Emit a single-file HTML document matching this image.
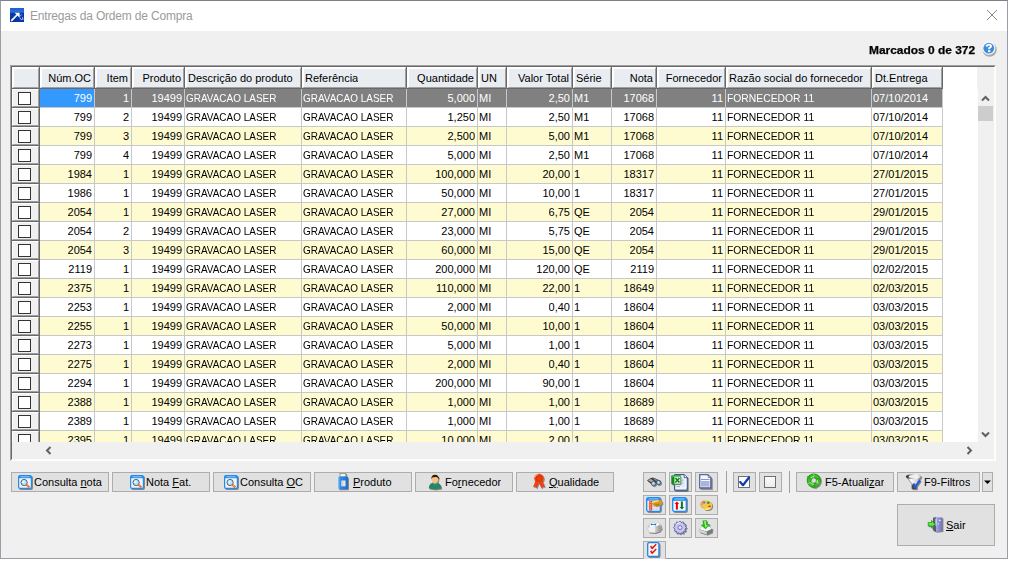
<!DOCTYPE html><html><head><meta charset="utf-8"><style>
*{box-sizing:border-box}
body{margin:0;width:1022px;height:566px;background:#fff;overflow:hidden;position:relative;font-family:"Liberation Sans",sans-serif;font-size:11px;color:#000}
.a{position:absolute}
.win{position:absolute;left:0;top:0;width:1008px;height:559px;border:1px solid #9a9ea6;border-top-color:#7b8089;background:#f0f0f0}
.tb{position:absolute;left:0;top:0;width:1006px;height:30px;background:#fff}
.title{position:absolute;left:30px;top:7px;font-size:12px;line-height:16px;color:#9b9b9b;white-space:pre;letter-spacing:-0.18px}
.grid{position:absolute;left:10px;top:65px;width:986px;height:396px;border-top:1px solid #a0a0a0;border-left:1px solid #a0a0a0;border-right:1px solid #fff;border-bottom:1px solid #fff}
.gin{position:absolute;left:0;top:0;width:984px;height:394px;border-top:1px solid #696969;border-left:1px solid #696969;border-right:1px solid #fbfbfb;border-bottom:1px solid #fbfbfb;background:#fff;overflow:hidden}
.t{position:absolute;white-space:pre;line-height:18px;height:18px;overflow:hidden}
.hc{position:absolute;background:#e9edf1;border-top:2px solid #fff;border-left:2px solid #fff;border-right:1px solid #a0a0a0;border-bottom:1px solid #a0a0a0}
.dk{position:absolute;background:#696969}
.fc{position:absolute;left:0;width:27px;height:18px;background:#f0f0f0;border-top:1px solid #fff;border-left:1px solid #fff;border-right:1px solid #a0a0a0;border-bottom:1px solid #a0a0a0}
.cb{position:absolute;left:5px;top:2px;width:13px;height:13px;border:1px solid #333;background:#fff}
.u{transform:scaleX(0.905);transform-origin:0 0}
.u2{transform:scaleX(0.94);transform-origin:0 0}
.btn{position:absolute;height:20px;border:1px solid #adadad;background:#e1e1e1;line-height:18px;white-space:pre}
.sb{position:absolute;background:#f0f0f0}
.sh{filter:drop-shadow(1px 1px 0.6px rgba(0,0,0,0.4))}
</style></head><body>
<div class="win">
<div class="tb"></div>
</div>

<svg class="a" style="left:10px;top:8px" width="14" height="14" viewBox="0 0 14 14">
<defs><linearGradient id="tg" x1="0" y1="0" x2="0" y2="1"><stop offset="0" stop-color="#1e5ed0"/><stop offset="0.3" stop-color="#2f70d8"/><stop offset="0.36" stop-color="#0a3aa8"/><stop offset="1" stop-color="#0736a4"/></linearGradient></defs>
<rect x="0" y="0" width="14" height="14" fill="url(#tg)"/>
<path d="M1.2 12.8 L7.5 6.5" stroke="#fff" stroke-width="1.7"/><path d="M4.6 4.8 L9.6 4.8 L9.6 9.8 Z" fill="#fff"/>
<path d="M11.5 6.5 L10 8.5 M9.5 10 L11 10.5 M10.5 12 L12.5 11 M12.5 9 L13 12" stroke="#a8c4f0" stroke-width="1" opacity="0.9"/>
</svg>
<div class="title" style="left:30px;top:8px">Entregas da Ordem de Compra</div>
<svg class="a" style="left:986px;top:9px" width="12" height="12" viewBox="0 0 12 12"><path d="M1 1 L11 11 M11 1 L1 11" stroke="#7a7a7a" stroke-width="0.9"/></svg>
<div class="a" style="left:869px;top:41px;font-weight:bold;line-height:18px;white-space:pre;transform:scaleX(1.085);transform-origin:0 0;-webkit-text-stroke:0.25px #000">Marcados 0 de 372</div>
<svg class="a" style="left:980px;top:40px" width="18" height="18" viewBox="0 0 18 18">
<circle cx="9.6" cy="9.6" r="7.2" fill="#555" opacity="0.45"/>
<circle cx="8.8" cy="8.2" r="6.6" fill="#fbfaf8"/>
<circle cx="8.8" cy="8.2" r="5.4" fill="#3c8ce0"/>
<path d="M4.5 7 Q8.8 2.5 13 7 Q8.8 5 4.5 7Z" fill="#7fb8f0" opacity="0.6"/>
<path d="M6.6 6.6 Q6.8 4.6 8.9 4.6 Q11 4.6 11 6.3 Q11 7.4 9.2 8.2 L9.2 9.2" stroke="#fff" stroke-width="1.9" fill="none"/>
<rect x="8" y="10.2" width="2.3" height="1.9" fill="#fff"/>
</svg>
<div class="grid"><div class="gin">
<div class="hc" style="left:0;top:0;width:27px;height:21px;background:#e9edf1"></div>
<div class="hc" style="left:28px;top:0;width:54px;height:21px"></div>
<div class="t" style="right:903px;top:2px">Núm.OC</div>
<div class="hc" style="left:83px;top:0;width:36px;height:21px"></div>
<div class="t" style="right:866px;top:2px">Item</div>
<div class="hc" style="left:120px;top:0;width:52px;height:21px"></div>
<div class="t" style="right:813px;top:2px">Produto</div>
<div class="hc" style="left:173px;top:0;width:116px;height:21px"></div>
<div class="t" style="left:176px;top:2px">Descrição do produto</div>
<div class="hc" style="left:290px;top:0;width:104px;height:21px"></div>
<div class="t" style="left:293px;top:2px">Referência</div>
<div class="hc" style="left:395px;top:0;width:70px;height:21px"></div>
<div class="t" style="right:520px;top:2px">Quantidade</div>
<div class="hc" style="left:466px;top:0;width:28px;height:21px"></div>
<div class="t" style="left:469px;top:2px">UN</div>
<div class="hc" style="left:495px;top:0;width:65px;height:21px"></div>
<div class="t" style="right:425px;top:2px">Valor Total</div>
<div class="hc" style="left:561px;top:0;width:38px;height:21px"></div>
<div class="t" style="left:564px;top:2px">Série</div>
<div class="hc" style="left:600px;top:0;width:44px;height:21px"></div>
<div class="t" style="right:341px;top:2px">Nota</div>
<div class="hc" style="left:645px;top:0;width:68px;height:21px"></div>
<div class="t" style="right:272px;top:2px">Fornecedor</div>
<div class="hc" style="left:714px;top:0;width:145px;height:21px"></div>
<div class="t" style="left:717px;top:2px">Razão social do fornecedor</div>
<div class="hc" style="left:860px;top:0;width:70px;height:21px"></div>
<div class="t" style="left:863px;top:2px">Dt.Entrega</div>
<div class="dk" style="left:0;top:21px;width:930px;height:1px"></div>
<div class="dk" style="left:27px;top:0;width:1px;height:22px"></div>
<div class="dk" style="left:82px;top:0;width:1px;height:22px"></div>
<div class="dk" style="left:119px;top:0;width:1px;height:22px"></div>
<div class="dk" style="left:172px;top:0;width:1px;height:22px"></div>
<div class="dk" style="left:289px;top:0;width:1px;height:22px"></div>
<div class="dk" style="left:394px;top:0;width:1px;height:22px"></div>
<div class="dk" style="left:465px;top:0;width:1px;height:22px"></div>
<div class="dk" style="left:494px;top:0;width:1px;height:22px"></div>
<div class="dk" style="left:560px;top:0;width:1px;height:22px"></div>
<div class="dk" style="left:599px;top:0;width:1px;height:22px"></div>
<div class="dk" style="left:644px;top:0;width:1px;height:22px"></div>
<div class="dk" style="left:713px;top:0;width:1px;height:22px"></div>
<div class="dk" style="left:859px;top:0;width:1px;height:22px"></div>
<div class="dk" style="left:930px;top:0;width:1px;height:22px"></div>
<div class="a" style="left:28px;top:22px;width:902px;height:19px;background:#808080;border-bottom:1px solid #c8c8c8"></div>
<div class="a" style="left:28px;top:22px;width:54px;height:18px;background:#3399ff"></div>
<div class="fc" style="top:22px"><div class="cb"></div></div>
<div class="dk" style="left:0;top:40px;width:28px;height:1px"></div>
<div class="t" style="right:902px;top:22px;color:#fff">799</div>
<div class="t" style="right:865px;top:22px;color:#fff">1</div>
<div class="t" style="right:812px;top:22px;color:#fff">19499</div>
<div class="t u" style="left:174px;top:22px;color:#fff">GRAVACAO LASER</div>
<div class="t u" style="left:291px;top:22px;color:#fff">GRAVACAO LASER</div>
<div class="t" style="right:519px;top:22px;color:#fff">5,000</div>
<div class="t" style="left:467px;top:22px;color:#fff">MI</div>
<div class="t" style="right:424px;top:22px;color:#fff">2,50</div>
<div class="t" style="left:562px;top:22px;color:#fff">M1</div>
<div class="t" style="right:340px;top:22px;color:#fff">17068</div>
<div class="t" style="right:271px;top:22px;color:#fff">11</div>
<div class="t u2" style="left:715px;top:22px;color:#fff">FORNECEDOR 11</div>
<div class="t" style="left:861px;top:22px;color:#fff">07/10/2014</div>
<div class="a" style="left:28px;top:41px;width:902px;height:19px;background:#fff;border-bottom:1px solid #c8c8c8"></div>
<div class="fc" style="top:41px"><div class="cb"></div></div>
<div class="dk" style="left:0;top:59px;width:28px;height:1px"></div>
<div class="t" style="right:902px;top:41px;color:#000">799</div>
<div class="t" style="right:865px;top:41px;color:#000">2</div>
<div class="t" style="right:812px;top:41px;color:#000">19499</div>
<div class="t u" style="left:174px;top:41px;color:#000">GRAVACAO LASER</div>
<div class="t u" style="left:291px;top:41px;color:#000">GRAVACAO LASER</div>
<div class="t" style="right:519px;top:41px;color:#000">1,250</div>
<div class="t" style="left:467px;top:41px;color:#000">MI</div>
<div class="t" style="right:424px;top:41px;color:#000">2,50</div>
<div class="t" style="left:562px;top:41px;color:#000">M1</div>
<div class="t" style="right:340px;top:41px;color:#000">17068</div>
<div class="t" style="right:271px;top:41px;color:#000">11</div>
<div class="t u2" style="left:715px;top:41px;color:#000">FORNECEDOR 11</div>
<div class="t" style="left:861px;top:41px;color:#000">07/10/2014</div>
<div class="a" style="left:28px;top:60px;width:902px;height:19px;background:#fefbd0;border-bottom:1px solid #c8c8c8"></div>
<div class="fc" style="top:60px"><div class="cb"></div></div>
<div class="dk" style="left:0;top:78px;width:28px;height:1px"></div>
<div class="t" style="right:902px;top:60px;color:#000">799</div>
<div class="t" style="right:865px;top:60px;color:#000">3</div>
<div class="t" style="right:812px;top:60px;color:#000">19499</div>
<div class="t u" style="left:174px;top:60px;color:#000">GRAVACAO LASER</div>
<div class="t u" style="left:291px;top:60px;color:#000">GRAVACAO LASER</div>
<div class="t" style="right:519px;top:60px;color:#000">2,500</div>
<div class="t" style="left:467px;top:60px;color:#000">MI</div>
<div class="t" style="right:424px;top:60px;color:#000">5,00</div>
<div class="t" style="left:562px;top:60px;color:#000">M1</div>
<div class="t" style="right:340px;top:60px;color:#000">17068</div>
<div class="t" style="right:271px;top:60px;color:#000">11</div>
<div class="t u2" style="left:715px;top:60px;color:#000">FORNECEDOR 11</div>
<div class="t" style="left:861px;top:60px;color:#000">07/10/2014</div>
<div class="a" style="left:28px;top:79px;width:902px;height:19px;background:#fff;border-bottom:1px solid #c8c8c8"></div>
<div class="fc" style="top:79px"><div class="cb"></div></div>
<div class="dk" style="left:0;top:97px;width:28px;height:1px"></div>
<div class="t" style="right:902px;top:79px;color:#000">799</div>
<div class="t" style="right:865px;top:79px;color:#000">4</div>
<div class="t" style="right:812px;top:79px;color:#000">19499</div>
<div class="t u" style="left:174px;top:79px;color:#000">GRAVACAO LASER</div>
<div class="t u" style="left:291px;top:79px;color:#000">GRAVACAO LASER</div>
<div class="t" style="right:519px;top:79px;color:#000">5,000</div>
<div class="t" style="left:467px;top:79px;color:#000">MI</div>
<div class="t" style="right:424px;top:79px;color:#000">2,50</div>
<div class="t" style="left:562px;top:79px;color:#000">M1</div>
<div class="t" style="right:340px;top:79px;color:#000">17068</div>
<div class="t" style="right:271px;top:79px;color:#000">11</div>
<div class="t u2" style="left:715px;top:79px;color:#000">FORNECEDOR 11</div>
<div class="t" style="left:861px;top:79px;color:#000">07/10/2014</div>
<div class="a" style="left:28px;top:98px;width:902px;height:19px;background:#fefbd0;border-bottom:1px solid #c8c8c8"></div>
<div class="fc" style="top:98px"><div class="cb"></div></div>
<div class="dk" style="left:0;top:116px;width:28px;height:1px"></div>
<div class="t" style="right:902px;top:98px;color:#000">1984</div>
<div class="t" style="right:865px;top:98px;color:#000">1</div>
<div class="t" style="right:812px;top:98px;color:#000">19499</div>
<div class="t u" style="left:174px;top:98px;color:#000">GRAVACAO LASER</div>
<div class="t u" style="left:291px;top:98px;color:#000">GRAVACAO LASER</div>
<div class="t" style="right:519px;top:98px;color:#000">100,000</div>
<div class="t" style="left:467px;top:98px;color:#000">MI</div>
<div class="t" style="right:424px;top:98px;color:#000">20,00</div>
<div class="t" style="left:562px;top:98px;color:#000">1</div>
<div class="t" style="right:340px;top:98px;color:#000">18317</div>
<div class="t" style="right:271px;top:98px;color:#000">11</div>
<div class="t u2" style="left:715px;top:98px;color:#000">FORNECEDOR 11</div>
<div class="t" style="left:861px;top:98px;color:#000">27/01/2015</div>
<div class="a" style="left:28px;top:117px;width:902px;height:19px;background:#fff;border-bottom:1px solid #c8c8c8"></div>
<div class="fc" style="top:117px"><div class="cb"></div></div>
<div class="dk" style="left:0;top:135px;width:28px;height:1px"></div>
<div class="t" style="right:902px;top:117px;color:#000">1986</div>
<div class="t" style="right:865px;top:117px;color:#000">1</div>
<div class="t" style="right:812px;top:117px;color:#000">19499</div>
<div class="t u" style="left:174px;top:117px;color:#000">GRAVACAO LASER</div>
<div class="t u" style="left:291px;top:117px;color:#000">GRAVACAO LASER</div>
<div class="t" style="right:519px;top:117px;color:#000">50,000</div>
<div class="t" style="left:467px;top:117px;color:#000">MI</div>
<div class="t" style="right:424px;top:117px;color:#000">10,00</div>
<div class="t" style="left:562px;top:117px;color:#000">1</div>
<div class="t" style="right:340px;top:117px;color:#000">18317</div>
<div class="t" style="right:271px;top:117px;color:#000">11</div>
<div class="t u2" style="left:715px;top:117px;color:#000">FORNECEDOR 11</div>
<div class="t" style="left:861px;top:117px;color:#000">27/01/2015</div>
<div class="a" style="left:28px;top:136px;width:902px;height:19px;background:#fefbd0;border-bottom:1px solid #c8c8c8"></div>
<div class="fc" style="top:136px"><div class="cb"></div></div>
<div class="dk" style="left:0;top:154px;width:28px;height:1px"></div>
<div class="t" style="right:902px;top:136px;color:#000">2054</div>
<div class="t" style="right:865px;top:136px;color:#000">1</div>
<div class="t" style="right:812px;top:136px;color:#000">19499</div>
<div class="t u" style="left:174px;top:136px;color:#000">GRAVACAO LASER</div>
<div class="t u" style="left:291px;top:136px;color:#000">GRAVACAO LASER</div>
<div class="t" style="right:519px;top:136px;color:#000">27,000</div>
<div class="t" style="left:467px;top:136px;color:#000">MI</div>
<div class="t" style="right:424px;top:136px;color:#000">6,75</div>
<div class="t" style="left:562px;top:136px;color:#000">QE</div>
<div class="t" style="right:340px;top:136px;color:#000">2054</div>
<div class="t" style="right:271px;top:136px;color:#000">11</div>
<div class="t u2" style="left:715px;top:136px;color:#000">FORNECEDOR 11</div>
<div class="t" style="left:861px;top:136px;color:#000">29/01/2015</div>
<div class="a" style="left:28px;top:155px;width:902px;height:19px;background:#fff;border-bottom:1px solid #c8c8c8"></div>
<div class="fc" style="top:155px"><div class="cb"></div></div>
<div class="dk" style="left:0;top:173px;width:28px;height:1px"></div>
<div class="t" style="right:902px;top:155px;color:#000">2054</div>
<div class="t" style="right:865px;top:155px;color:#000">2</div>
<div class="t" style="right:812px;top:155px;color:#000">19499</div>
<div class="t u" style="left:174px;top:155px;color:#000">GRAVACAO LASER</div>
<div class="t u" style="left:291px;top:155px;color:#000">GRAVACAO LASER</div>
<div class="t" style="right:519px;top:155px;color:#000">23,000</div>
<div class="t" style="left:467px;top:155px;color:#000">MI</div>
<div class="t" style="right:424px;top:155px;color:#000">5,75</div>
<div class="t" style="left:562px;top:155px;color:#000">QE</div>
<div class="t" style="right:340px;top:155px;color:#000">2054</div>
<div class="t" style="right:271px;top:155px;color:#000">11</div>
<div class="t u2" style="left:715px;top:155px;color:#000">FORNECEDOR 11</div>
<div class="t" style="left:861px;top:155px;color:#000">29/01/2015</div>
<div class="a" style="left:28px;top:174px;width:902px;height:19px;background:#fefbd0;border-bottom:1px solid #c8c8c8"></div>
<div class="fc" style="top:174px"><div class="cb"></div></div>
<div class="dk" style="left:0;top:192px;width:28px;height:1px"></div>
<div class="t" style="right:902px;top:174px;color:#000">2054</div>
<div class="t" style="right:865px;top:174px;color:#000">3</div>
<div class="t" style="right:812px;top:174px;color:#000">19499</div>
<div class="t u" style="left:174px;top:174px;color:#000">GRAVACAO LASER</div>
<div class="t u" style="left:291px;top:174px;color:#000">GRAVACAO LASER</div>
<div class="t" style="right:519px;top:174px;color:#000">60,000</div>
<div class="t" style="left:467px;top:174px;color:#000">MI</div>
<div class="t" style="right:424px;top:174px;color:#000">15,00</div>
<div class="t" style="left:562px;top:174px;color:#000">QE</div>
<div class="t" style="right:340px;top:174px;color:#000">2054</div>
<div class="t" style="right:271px;top:174px;color:#000">11</div>
<div class="t u2" style="left:715px;top:174px;color:#000">FORNECEDOR 11</div>
<div class="t" style="left:861px;top:174px;color:#000">29/01/2015</div>
<div class="a" style="left:28px;top:193px;width:902px;height:19px;background:#fff;border-bottom:1px solid #c8c8c8"></div>
<div class="fc" style="top:193px"><div class="cb"></div></div>
<div class="dk" style="left:0;top:211px;width:28px;height:1px"></div>
<div class="t" style="right:902px;top:193px;color:#000">2119</div>
<div class="t" style="right:865px;top:193px;color:#000">1</div>
<div class="t" style="right:812px;top:193px;color:#000">19499</div>
<div class="t u" style="left:174px;top:193px;color:#000">GRAVACAO LASER</div>
<div class="t u" style="left:291px;top:193px;color:#000">GRAVACAO LASER</div>
<div class="t" style="right:519px;top:193px;color:#000">200,000</div>
<div class="t" style="left:467px;top:193px;color:#000">MI</div>
<div class="t" style="right:424px;top:193px;color:#000">120,00</div>
<div class="t" style="left:562px;top:193px;color:#000">QE</div>
<div class="t" style="right:340px;top:193px;color:#000">2119</div>
<div class="t" style="right:271px;top:193px;color:#000">11</div>
<div class="t u2" style="left:715px;top:193px;color:#000">FORNECEDOR 11</div>
<div class="t" style="left:861px;top:193px;color:#000">02/02/2015</div>
<div class="a" style="left:28px;top:212px;width:902px;height:19px;background:#fefbd0;border-bottom:1px solid #c8c8c8"></div>
<div class="fc" style="top:212px"><div class="cb"></div></div>
<div class="dk" style="left:0;top:230px;width:28px;height:1px"></div>
<div class="t" style="right:902px;top:212px;color:#000">2375</div>
<div class="t" style="right:865px;top:212px;color:#000">1</div>
<div class="t" style="right:812px;top:212px;color:#000">19499</div>
<div class="t u" style="left:174px;top:212px;color:#000">GRAVACAO LASER</div>
<div class="t u" style="left:291px;top:212px;color:#000">GRAVACAO LASER</div>
<div class="t" style="right:519px;top:212px;color:#000">110,000</div>
<div class="t" style="left:467px;top:212px;color:#000">MI</div>
<div class="t" style="right:424px;top:212px;color:#000">22,00</div>
<div class="t" style="left:562px;top:212px;color:#000">1</div>
<div class="t" style="right:340px;top:212px;color:#000">18649</div>
<div class="t" style="right:271px;top:212px;color:#000">11</div>
<div class="t u2" style="left:715px;top:212px;color:#000">FORNECEDOR 11</div>
<div class="t" style="left:861px;top:212px;color:#000">02/03/2015</div>
<div class="a" style="left:28px;top:231px;width:902px;height:19px;background:#fff;border-bottom:1px solid #c8c8c8"></div>
<div class="fc" style="top:231px"><div class="cb"></div></div>
<div class="dk" style="left:0;top:249px;width:28px;height:1px"></div>
<div class="t" style="right:902px;top:231px;color:#000">2253</div>
<div class="t" style="right:865px;top:231px;color:#000">1</div>
<div class="t" style="right:812px;top:231px;color:#000">19499</div>
<div class="t u" style="left:174px;top:231px;color:#000">GRAVACAO LASER</div>
<div class="t u" style="left:291px;top:231px;color:#000">GRAVACAO LASER</div>
<div class="t" style="right:519px;top:231px;color:#000">2,000</div>
<div class="t" style="left:467px;top:231px;color:#000">MI</div>
<div class="t" style="right:424px;top:231px;color:#000">0,40</div>
<div class="t" style="left:562px;top:231px;color:#000">1</div>
<div class="t" style="right:340px;top:231px;color:#000">18604</div>
<div class="t" style="right:271px;top:231px;color:#000">11</div>
<div class="t u2" style="left:715px;top:231px;color:#000">FORNECEDOR 11</div>
<div class="t" style="left:861px;top:231px;color:#000">03/03/2015</div>
<div class="a" style="left:28px;top:250px;width:902px;height:19px;background:#fefbd0;border-bottom:1px solid #c8c8c8"></div>
<div class="fc" style="top:250px"><div class="cb"></div></div>
<div class="dk" style="left:0;top:268px;width:28px;height:1px"></div>
<div class="t" style="right:902px;top:250px;color:#000">2255</div>
<div class="t" style="right:865px;top:250px;color:#000">1</div>
<div class="t" style="right:812px;top:250px;color:#000">19499</div>
<div class="t u" style="left:174px;top:250px;color:#000">GRAVACAO LASER</div>
<div class="t u" style="left:291px;top:250px;color:#000">GRAVACAO LASER</div>
<div class="t" style="right:519px;top:250px;color:#000">50,000</div>
<div class="t" style="left:467px;top:250px;color:#000">MI</div>
<div class="t" style="right:424px;top:250px;color:#000">10,00</div>
<div class="t" style="left:562px;top:250px;color:#000">1</div>
<div class="t" style="right:340px;top:250px;color:#000">18604</div>
<div class="t" style="right:271px;top:250px;color:#000">11</div>
<div class="t u2" style="left:715px;top:250px;color:#000">FORNECEDOR 11</div>
<div class="t" style="left:861px;top:250px;color:#000">03/03/2015</div>
<div class="a" style="left:28px;top:269px;width:902px;height:19px;background:#fff;border-bottom:1px solid #c8c8c8"></div>
<div class="fc" style="top:269px"><div class="cb"></div></div>
<div class="dk" style="left:0;top:287px;width:28px;height:1px"></div>
<div class="t" style="right:902px;top:269px;color:#000">2273</div>
<div class="t" style="right:865px;top:269px;color:#000">1</div>
<div class="t" style="right:812px;top:269px;color:#000">19499</div>
<div class="t u" style="left:174px;top:269px;color:#000">GRAVACAO LASER</div>
<div class="t u" style="left:291px;top:269px;color:#000">GRAVACAO LASER</div>
<div class="t" style="right:519px;top:269px;color:#000">5,000</div>
<div class="t" style="left:467px;top:269px;color:#000">MI</div>
<div class="t" style="right:424px;top:269px;color:#000">1,00</div>
<div class="t" style="left:562px;top:269px;color:#000">1</div>
<div class="t" style="right:340px;top:269px;color:#000">18604</div>
<div class="t" style="right:271px;top:269px;color:#000">11</div>
<div class="t u2" style="left:715px;top:269px;color:#000">FORNECEDOR 11</div>
<div class="t" style="left:861px;top:269px;color:#000">03/03/2015</div>
<div class="a" style="left:28px;top:288px;width:902px;height:19px;background:#fefbd0;border-bottom:1px solid #c8c8c8"></div>
<div class="fc" style="top:288px"><div class="cb"></div></div>
<div class="dk" style="left:0;top:306px;width:28px;height:1px"></div>
<div class="t" style="right:902px;top:288px;color:#000">2275</div>
<div class="t" style="right:865px;top:288px;color:#000">1</div>
<div class="t" style="right:812px;top:288px;color:#000">19499</div>
<div class="t u" style="left:174px;top:288px;color:#000">GRAVACAO LASER</div>
<div class="t u" style="left:291px;top:288px;color:#000">GRAVACAO LASER</div>
<div class="t" style="right:519px;top:288px;color:#000">2,000</div>
<div class="t" style="left:467px;top:288px;color:#000">MI</div>
<div class="t" style="right:424px;top:288px;color:#000">0,40</div>
<div class="t" style="left:562px;top:288px;color:#000">1</div>
<div class="t" style="right:340px;top:288px;color:#000">18604</div>
<div class="t" style="right:271px;top:288px;color:#000">11</div>
<div class="t u2" style="left:715px;top:288px;color:#000">FORNECEDOR 11</div>
<div class="t" style="left:861px;top:288px;color:#000">03/03/2015</div>
<div class="a" style="left:28px;top:307px;width:902px;height:19px;background:#fff;border-bottom:1px solid #c8c8c8"></div>
<div class="fc" style="top:307px"><div class="cb"></div></div>
<div class="dk" style="left:0;top:325px;width:28px;height:1px"></div>
<div class="t" style="right:902px;top:307px;color:#000">2294</div>
<div class="t" style="right:865px;top:307px;color:#000">1</div>
<div class="t" style="right:812px;top:307px;color:#000">19499</div>
<div class="t u" style="left:174px;top:307px;color:#000">GRAVACAO LASER</div>
<div class="t u" style="left:291px;top:307px;color:#000">GRAVACAO LASER</div>
<div class="t" style="right:519px;top:307px;color:#000">200,000</div>
<div class="t" style="left:467px;top:307px;color:#000">MI</div>
<div class="t" style="right:424px;top:307px;color:#000">90,00</div>
<div class="t" style="left:562px;top:307px;color:#000">1</div>
<div class="t" style="right:340px;top:307px;color:#000">18604</div>
<div class="t" style="right:271px;top:307px;color:#000">11</div>
<div class="t u2" style="left:715px;top:307px;color:#000">FORNECEDOR 11</div>
<div class="t" style="left:861px;top:307px;color:#000">03/03/2015</div>
<div class="a" style="left:28px;top:326px;width:902px;height:19px;background:#fefbd0;border-bottom:1px solid #c8c8c8"></div>
<div class="fc" style="top:326px"><div class="cb"></div></div>
<div class="dk" style="left:0;top:344px;width:28px;height:1px"></div>
<div class="t" style="right:902px;top:326px;color:#000">2388</div>
<div class="t" style="right:865px;top:326px;color:#000">1</div>
<div class="t" style="right:812px;top:326px;color:#000">19499</div>
<div class="t u" style="left:174px;top:326px;color:#000">GRAVACAO LASER</div>
<div class="t u" style="left:291px;top:326px;color:#000">GRAVACAO LASER</div>
<div class="t" style="right:519px;top:326px;color:#000">1,000</div>
<div class="t" style="left:467px;top:326px;color:#000">MI</div>
<div class="t" style="right:424px;top:326px;color:#000">1,00</div>
<div class="t" style="left:562px;top:326px;color:#000">1</div>
<div class="t" style="right:340px;top:326px;color:#000">18689</div>
<div class="t" style="right:271px;top:326px;color:#000">11</div>
<div class="t u2" style="left:715px;top:326px;color:#000">FORNECEDOR 11</div>
<div class="t" style="left:861px;top:326px;color:#000">03/03/2015</div>
<div class="a" style="left:28px;top:345px;width:902px;height:19px;background:#fff;border-bottom:1px solid #c8c8c8"></div>
<div class="fc" style="top:345px"><div class="cb"></div></div>
<div class="dk" style="left:0;top:363px;width:28px;height:1px"></div>
<div class="t" style="right:902px;top:345px;color:#000">2389</div>
<div class="t" style="right:865px;top:345px;color:#000">1</div>
<div class="t" style="right:812px;top:345px;color:#000">19499</div>
<div class="t u" style="left:174px;top:345px;color:#000">GRAVACAO LASER</div>
<div class="t u" style="left:291px;top:345px;color:#000">GRAVACAO LASER</div>
<div class="t" style="right:519px;top:345px;color:#000">1,000</div>
<div class="t" style="left:467px;top:345px;color:#000">MI</div>
<div class="t" style="right:424px;top:345px;color:#000">1,00</div>
<div class="t" style="left:562px;top:345px;color:#000">1</div>
<div class="t" style="right:340px;top:345px;color:#000">18689</div>
<div class="t" style="right:271px;top:345px;color:#000">11</div>
<div class="t u2" style="left:715px;top:345px;color:#000">FORNECEDOR 11</div>
<div class="t" style="left:861px;top:345px;color:#000">03/03/2015</div>
<div class="a" style="left:28px;top:364px;width:902px;height:19px;background:#fefbd0;border-bottom:1px solid #c8c8c8"></div>
<div class="fc" style="top:364px"><div class="cb"></div></div>
<div class="dk" style="left:0;top:382px;width:28px;height:1px"></div>
<div class="t" style="right:902px;top:364px;color:#000">2395</div>
<div class="t" style="right:865px;top:364px;color:#000">1</div>
<div class="t" style="right:812px;top:364px;color:#000">19499</div>
<div class="t u" style="left:174px;top:364px;color:#000">GRAVACAO LASER</div>
<div class="t u" style="left:291px;top:364px;color:#000">GRAVACAO LASER</div>
<div class="t" style="right:519px;top:364px;color:#000">10,000</div>
<div class="t" style="left:467px;top:364px;color:#000">MI</div>
<div class="t" style="right:424px;top:364px;color:#000">2,00</div>
<div class="t" style="left:562px;top:364px;color:#000">1</div>
<div class="t" style="right:340px;top:364px;color:#000">18689</div>
<div class="t" style="right:271px;top:364px;color:#000">11</div>
<div class="t u2" style="left:715px;top:364px;color:#000">FORNECEDOR 11</div>
<div class="t" style="left:861px;top:364px;color:#000">03/03/2015</div>
<div class="a" style="left:82px;top:22px;width:1px;height:353px;background:#c8c8c8"></div>
<div class="a" style="left:119px;top:22px;width:1px;height:353px;background:#c8c8c8"></div>
<div class="a" style="left:172px;top:22px;width:1px;height:353px;background:#c8c8c8"></div>
<div class="a" style="left:289px;top:22px;width:1px;height:353px;background:#c8c8c8"></div>
<div class="a" style="left:394px;top:22px;width:1px;height:353px;background:#c8c8c8"></div>
<div class="a" style="left:465px;top:22px;width:1px;height:353px;background:#c8c8c8"></div>
<div class="a" style="left:494px;top:22px;width:1px;height:353px;background:#c8c8c8"></div>
<div class="a" style="left:560px;top:22px;width:1px;height:353px;background:#c8c8c8"></div>
<div class="a" style="left:599px;top:22px;width:1px;height:353px;background:#c8c8c8"></div>
<div class="a" style="left:644px;top:22px;width:1px;height:353px;background:#c8c8c8"></div>
<div class="a" style="left:713px;top:22px;width:1px;height:353px;background:#c8c8c8"></div>
<div class="a" style="left:859px;top:22px;width:1px;height:353px;background:#c8c8c8"></div>
<div class="a" style="left:930px;top:22px;width:1px;height:353px;background:#c8c8c8"></div>
<div class="dk" style="left:27px;top:22px;width:1px;height:353px"></div>
<div class="sb" style="left:965px;top:0;width:17px;height:22px"></div>
<div class="sb" style="left:966px;top:22px;width:16px;height:353px"></div>
<div class="sb" style="left:28px;top:375px;width:954px;height:17px"></div>
<div class="sb" style="left:0;top:375px;width:28px;height:17px"></div>
<div class="a" style="left:966px;top:39px;width:15px;height:15px;background:#cdcdcd"></div>
<svg class="a" style="left:969px;top:27px" width="9" height="9" viewBox="0 0 9 9"><path d="M1 6.5 L4.5 3 L8 6.5" stroke="#606060" stroke-width="2" fill="none" transform="rotate(0 4.5 4.5)"/></svg>
<svg class="a" style="left:969px;top:363px" width="9" height="9" viewBox="0 0 9 9"><path d="M1 6.5 L4.5 3 L8 6.5" stroke="#606060" stroke-width="2" fill="none" transform="rotate(180 4.5 4.5)"/></svg>
<svg class="a" style="left:32px;top:379px" width="9" height="9" viewBox="0 0 9 9"><path d="M1 6.5 L4.5 3 L8 6.5" stroke="#606060" stroke-width="2" fill="none" transform="rotate(-90 4.5 4.5)"/></svg>
<svg class="a" style="left:953px;top:379px" width="9" height="9" viewBox="0 0 9 9"><path d="M1 6.5 L4.5 3 L8 6.5" stroke="#606060" stroke-width="2" fill="none" transform="rotate(90 4.5 4.5)"/></svg>
</div></div>
<div class="btn" style="left:11px;top:472px;width:98px;height:20px"></div><div class="a sh" style="left:18px;top:475px;line-height:0"><svg width="14" height="14" viewBox="0 0 14 14"><rect x="0.6" y="0.6" width="12.8" height="12.8" rx="1.4" fill="#f4f0fc" stroke="#1a8cf4" stroke-width="1.2"/><rect x="1" y="1" width="12" height="2.2" fill="#1a8cf4"/><line x1="2.5" y1="1.8" x2="11.5" y2="1.8" stroke="#b8e0ff" stroke-width="0.8"/><circle cx="6.1" cy="7.5" r="3.1" fill="#b4e4fa" stroke="#606060" stroke-width="1"/><circle cx="5.4" cy="6.8" r="1.2" fill="#e4f6ff"/><path d="M8.4 9.7 L11.4 12.4" stroke="#f07020" stroke-width="2.1"/><path d="M9.4 10.5 L10.4 11.4" stroke="#ffd050" stroke-width="0.8"/></svg></div><div class="t" style="left:34px;top:473px">Consulta <span style="text-decoration:underline">n</span>ota</div>
<div class="btn" style="left:112px;top:472px;width:98px;height:20px"></div><div class="a sh" style="left:130px;top:475px;line-height:0"><svg width="14" height="14" viewBox="0 0 14 14"><rect x="0.6" y="0.6" width="12.8" height="12.8" rx="1.4" fill="#f4f0fc" stroke="#1a8cf4" stroke-width="1.2"/><rect x="1" y="1" width="12" height="2.2" fill="#1a8cf4"/><line x1="2.5" y1="1.8" x2="11.5" y2="1.8" stroke="#b8e0ff" stroke-width="0.8"/><circle cx="6.1" cy="7.5" r="3.1" fill="#b4e4fa" stroke="#606060" stroke-width="1"/><circle cx="5.4" cy="6.8" r="1.2" fill="#e4f6ff"/><path d="M8.4 9.7 L11.4 12.4" stroke="#f07020" stroke-width="2.1"/><path d="M9.4 10.5 L10.4 11.4" stroke="#ffd050" stroke-width="0.8"/></svg></div><div class="t" style="left:146px;top:473px">Nota <span style="text-decoration:underline">F</span>at.</div>
<div class="btn" style="left:213px;top:472px;width:98px;height:20px"></div><div class="a sh" style="left:224px;top:475px;line-height:0"><svg width="14" height="14" viewBox="0 0 14 14"><rect x="0.6" y="0.6" width="12.8" height="12.8" rx="1.4" fill="#f4f0fc" stroke="#1a8cf4" stroke-width="1.2"/><rect x="1" y="1" width="12" height="2.2" fill="#1a8cf4"/><line x1="2.5" y1="1.8" x2="11.5" y2="1.8" stroke="#b8e0ff" stroke-width="0.8"/><circle cx="6.1" cy="7.5" r="3.1" fill="#b4e4fa" stroke="#606060" stroke-width="1"/><circle cx="5.4" cy="6.8" r="1.2" fill="#e4f6ff"/><path d="M8.4 9.7 L11.4 12.4" stroke="#f07020" stroke-width="2.1"/><path d="M9.4 10.5 L10.4 11.4" stroke="#ffd050" stroke-width="0.8"/></svg></div><div class="t" style="left:240px;top:473px">Consulta <span style="text-decoration:underline">O</span>C</div>
<div class="btn" style="left:314px;top:472px;width:98px;height:20px"></div><div class="a sh" style="left:337px;top:473px;line-height:0"><svg width="12" height="17" viewBox="0 0 12 17"><defs><linearGradient id="bt" x1="0" x2="1"><stop offset="0" stop-color="#8cc8fa"/><stop offset="0.25" stop-color="#2e8ae6"/><stop offset="1" stop-color="#1f6fd0"/></linearGradient></defs><rect x="3" y="0.5" width="5.8" height="3.6" fill="#f4f4f4" stroke="#8a8a8a" stroke-width="0.8"/><path d="M1 4.5 Q1 3.5 2 3.5 L10 3.5 Q11 3.5 11 4.5 L11 15 Q11 16.3 9.5 16.3 L2.5 16.3 Q1 16.3 1 15 Z" fill="url(#bt)"/><rect x="4.3" y="7.5" width="4.2" height="5.8" fill="#efe6dc"/><rect x="5.2" y="8.2" width="1" height="4.5" fill="#d8c8b8"/></svg></div><div class="t" style="left:353px;top:473px"><span style="text-decoration:underline">P</span>roduto</div>
<div class="btn" style="left:415px;top:472px;width:98px;height:20px"></div><div class="a sh" style="left:428px;top:474px;line-height:0"><svg width="14" height="16" viewBox="0 0 14 16"><path d="M0.8 14.6 Q0.6 8.6 7 8.6 Q13.4 8.6 13.2 14.6 Q7 16.2 0.8 14.6 Z" fill="#2a8566"/><path d="M4.2 8.8 L7 10.8 L9.8 8.8 Z" fill="#50b8a8"/><ellipse cx="7" cy="5.4" rx="3.2" ry="3.6" fill="#fcc080"/><path d="M3.4 5.4 Q3 0.8 7 0.8 Q11 0.8 10.8 5.6 Q10.4 3.4 9.2 3.2 Q7 2.6 4.2 3.6 Z" fill="#2e1e08"/><path d="M9.6 3 L10.8 5 L10.6 3.2 Z" fill="#1a1004"/></svg></div><div class="t" style="left:445px;top:473px">Fo<span style="text-decoration:underline">r</span>necedor</div>
<div class="btn" style="left:516px;top:472px;width:98px;height:20px"></div><div class="a sh" style="left:532px;top:473px;line-height:0"><svg width="14" height="16" viewBox="0 0 14 16"><path d="M3.5 8 L1 14 L3.2 13.4 L4.3 15.5 L6.8 9.5 Z" fill="#f03c10"/><path d="M10.3 8 L12.8 14 L10.6 13.4 L9.5 15.5 L7 9.5 Z" fill="#f03c10"/><path d="M2.4 10.5 L3.2 11 M11.4 10.5 L10.6 11" stroke="#ffa040" stroke-width="1"/><circle cx="7" cy="5.6" r="4.8" fill="#f04a14"/><circle cx="7" cy="5.6" r="3.4" fill="#d83208"/><circle cx="7.2" cy="5.8" r="2.4" fill="#e84010"/><path d="M3.2 4 Q4 2 6 1.5" stroke="#ffb070" stroke-width="1" fill="none"/></svg></div><div class="t" style="left:549px;top:473px"><span style="text-decoration:underline">Q</span>ualidade</div>
<div class="btn" style="left:643px;top:472px;width:23px;height:20px;"></div>
<div class="btn" style="left:669px;top:472px;width:23px;height:20px;"></div>
<div class="btn" style="left:695px;top:472px;width:23px;height:20px;"></div>
<div class="btn" style="left:643px;top:495px;width:23px;height:20px;"></div>
<div class="btn" style="left:669px;top:495px;width:23px;height:20px;"></div>
<div class="btn" style="left:695px;top:495px;width:23px;height:20px;"></div>
<div class="btn" style="left:643px;top:518px;width:23px;height:20px;"></div>
<div class="btn" style="left:669px;top:518px;width:23px;height:20px;"></div>
<div class="btn" style="left:695px;top:518px;width:23px;height:20px;"></div>
<div class="btn" style="left:643px;top:541px;width:23px;height:18px;border-bottom:none"></div>
<div class="a sh" style="left:646px;top:474px;line-height:0"><svg width="16" height="16" viewBox="0 0 16 16"><path d="M1 6.6 L4.2 4.2 L6.8 3.4 L9.4 4.4 L14.6 6.8 L13.6 10.2 L9.6 9.6 L7.4 11.6 Z" fill="#3c3c3c"/><path d="M2 6.4 L4.6 4.8 L8.2 7.2 L6 8.4 Z" fill="#a8a8a8"/><path d="M6.4 4.2 L9 4.8 L12.2 6.4 L10 7 Z" fill="#8a8a8a"/><circle cx="7.6" cy="9.6" r="2.2" fill="#8cc4f4" stroke="#444" stroke-width="0.7"/><circle cx="12.6" cy="8.6" r="2.1" fill="#8cc4f4" stroke="#444" stroke-width="0.7"/><circle cx="7.2" cy="9" r="0.8" fill="#e0f0ff"/><circle cx="12.2" cy="8" r="0.8" fill="#e0f0ff"/></svg></div>
<div class="a sh" style="left:671px;top:474px;line-height:0"><svg width="17" height="17" viewBox="0 0 17 17"><path d="M3.6 0.6 L13.4 0.6 L16.2 3.4 L16.2 16.2 L3.6 16.2 Z" fill="#dfe9f8" stroke="#2c4a7c" stroke-width="1"/><path d="M5 14 L14.8 14 L14.8 4.5" stroke="#ffffff" stroke-width="1" fill="none"/><path d="M5.6 12.6 L9 12.6 M11.6 5.5 L11.6 7 M11.6 8.5 L11.6 9.5" stroke="#8aa8d8" stroke-width="0.9"/><path d="M13.2 0.8 L13.2 3.6 L16 3.6" fill="#ffffff" stroke="#2c4a7c" stroke-width="0.8"/><rect x="0.3" y="1.3" width="9.6" height="9.2" rx="1" fill="#108a28"/><rect x="1" y="1.6" width="8.6" height="1.4" fill="#40c050"/><rect x="3.4" y="2.8" width="6.2" height="7" fill="#d4f4c4"/><path d="M4.4 4 L8.4 8.6 M8.4 4 L4.4 8.6" stroke="#1e7a28" stroke-width="1.5"/><path d="M3.2 10.5 L10 10.5 L10 3" stroke="#707070" stroke-width="0.8" fill="none"/></svg></div>
<div class="a sh" style="left:698px;top:474px;line-height:0"><svg width="16" height="16" viewBox="0 0 16 16"><path d="M2.6 1.4 L11 1.4 L14 4.4 L14 15.2 L2.6 15.2 Z" fill="#6a7080" opacity="0.55"/><path d="M1.7 0.7 L9.8 0.7 L12.8 3.7 L12.8 13.8 L1.7 13.8 Z" fill="#f6f8fc" stroke="#5a6a9a" stroke-width="1.3"/><path d="M9.8 0.7 L9.8 3.7 L12.8 3.7 Z" fill="#5a6a9a"/><circle cx="11" cy="2.6" r="0.6" fill="#fff"/><line x1="3" y1="5.5" x2="11.5" y2="5.5" stroke="#8a96c8" stroke-width="1"/><rect x="3" y="7" width="8.5" height="5.6" fill="#a9b5de"/></svg></div>
<div class="a sh" style="left:646px;top:497px;line-height:0"><svg width="17" height="16" viewBox="0 0 17 16"><rect x="0.7" y="0.7" width="13.6" height="13.6" rx="1.5" fill="#f0eefa" stroke="#1a8cf4" stroke-width="1.3"/><rect x="1" y="1" width="13" height="2.6" fill="#1a8cf4"/><line x1="2.5" y1="1.9" x2="12.5" y2="1.9" stroke="#a8d8ff" stroke-width="0.8"/><path d="M2 7 L13 7 M2 9.4 L13 9.4 M2 11.8 L13 11.8 M8 9 L8 13.4 M11 9 L11 13.4" stroke="#c8c8f0" stroke-width="0.7"/><rect x="3.2" y="4" width="3" height="9.6" fill="#f04a1a"/><path d="M4.7 5 L4.7 13" stroke="#ffe8d0" stroke-width="0.8" stroke-dasharray="1 1.2"/><path d="M5 6.2 Q6.6 3.4 10 3 L14.4 2.8 Q16.8 4 16.4 6.6 L14.6 8.6 Q12.4 10.6 9.6 9.8 Q7.6 9.2 6.8 7.8 Z" fill="#d09a28"/><path d="M6.4 5.8 Q8.4 3.8 12.6 3.8" stroke="#fbe4a0" stroke-width="1.3" fill="none"/><path d="M8.6 7.2 Q11 8 13.6 7.2 M10 8.8 Q12 9.2 14 8.2" stroke="#9a6a10" stroke-width="0.6" fill="none"/></svg></div>
<div class="a sh" style="left:672px;top:497px;line-height:0"><svg width="16" height="16" viewBox="0 0 16 16"><rect x="0.7" y="0.7" width="13.6" height="13.6" rx="1.5" fill="#f6f4fc" stroke="#1a8cf4" stroke-width="1.3"/><rect x="1" y="1" width="13" height="2.8" fill="#1a8cf4"/><line x1="2.5" y1="2" x2="12.5" y2="2" stroke="#a8d8ff" stroke-width="0.9"/><path d="M4.9 12.6 L4.9 6.2" stroke="#f00000" stroke-width="2"/><path d="M2.6 7 L4.9 4.6 L7.2 7 Z" fill="#f00000"/><path d="M9.9 4.4 L9.9 10.6" stroke="#0a7a1a" stroke-width="2"/><path d="M7.6 10 L9.9 12.4 L12.2 10 Z" fill="#0a7a1a"/></svg></div>
<div class="a sh" style="left:698px;top:497px;line-height:0"><svg width="16" height="16" viewBox="0 0 16 16"><path d="M2 7.6 Q2 3.4 7.5 3.2 Q13.6 3.2 14.2 8 Q14.2 12.6 9.4 13 Q6.4 13.2 5.2 11 Q4.2 9.6 3 9.8 Q2 9.6 2 7.6 Z" fill="#f6c450"/><path d="M2.4 7.4 Q2.6 4 6.6 3.6 L5 8 Q4 9 3 9 Z" fill="#f4a050"/><path d="M7 12.2 Q11 12.8 13 10" stroke="#f8f060" stroke-width="1.4" fill="none"/><ellipse cx="6.2" cy="5.6" rx="1.4" ry="1" fill="#3a8ae8"/><ellipse cx="10.3" cy="5.8" rx="1.3" ry="1.2" fill="#20a020"/><ellipse cx="11.6" cy="9.4" rx="1.3" ry="0.9" fill="#e82030"/></svg></div>
<div class="a sh" style="left:646px;top:520px;line-height:0"><svg width="16" height="16" viewBox="0 0 16 16"><defs><linearGradient id="kr" x1="0" x2="1"><stop offset="0" stop-color="#d4d4d4"/><stop offset="1" stop-color="#8c8c8c"/></linearGradient></defs><path d="M1.2 8 L3.2 3.4 L11.8 2 L14.6 4.8 L15.6 8.6 L13.6 11.6 L8.8 13 L2.8 12.4 Z" fill="#c8c8c8"/><path d="M3.6 3.6 L11.6 2.4 L14 5 L9 6.6 L4 7.2 Z" fill="#ffffff"/><path d="M1.8 7.8 L4 7.2 L9 6.6 L9 12.6 L3.2 12 Z" fill="#f0f0f0"/><path d="M9 6.6 L14 5 L15.2 8.6 L13.4 11.2 L9 12.6 Z" fill="url(#kr)"/><path d="M5.4 4.4 L8 4.1 L10.6 3.2 L10.2 4.4 L9.4 5.8 L8.6 5 L6.6 5 Z" fill="#1a7ee8"/><circle cx="5.6" cy="4.4" r="0.9" fill="#1a6ad8"/></svg></div>
<div class="a sh" style="left:672px;top:520px;line-height:0"><svg width="16" height="16" viewBox="0 0 16 16"><g transform="translate(8 7.6)"><path d="M0 -6.6 L1.3 -5.2 L3.3 -5.7 L3.6 -3.8 L5.7 -3.3 L5.0 -1.5 L6.6 0 L5.0 1.5 L5.7 3.3 L3.6 3.8 L3.3 5.7 L1.3 5.2 L0 6.6 L-1.3 5.2 L-3.3 5.7 L-3.6 3.8 L-5.7 3.3 L-5.0 1.5 L-6.6 0 L-5.0 -1.5 L-5.7 -3.3 L-3.6 -3.8 L-3.3 -5.7 L-1.3 -5.2 Z" fill="#c4c4ee" stroke="#5c5ca8" stroke-width="0.8" stroke-linejoin="round"/><circle r="2" fill="none" stroke="#8080c0" stroke-width="1"/><circle r="1" fill="#f0f0ff"/><path d="M-4 -3 Q-2 -5 0 -5" stroke="#f4f4ff" stroke-width="1" fill="none"/></g></svg></div>
<div class="a sh" style="left:698px;top:520px;line-height:0"><svg width="16" height="16" viewBox="0 0 16 16"><path d="M1 9.2 L4.4 6.4 L11 6.6 L14.4 9 L13.8 12.4 L9 14.6 L2 12.4 Z" fill="#7a7a7a"/><path d="M1 9.2 L4.4 6.4 L11 6.6 L14 8.8 L8.6 11.6 Z" fill="#f4f4f4"/><path d="M1.2 9.6 L8.6 12 L8.8 14.4 L1.6 12 Z" fill="#d8d8d8"/><path d="M4.6 0.6 L8.8 0.2 L9.2 4.2 L12.2 4 L7.6 9.2 L2.6 4.8 L5 4.6 Z" fill="#22b81a"/><path d="M6 1.2 L7.8 1 L8 5 L9.8 5.2 L7.4 7.8 Z" fill="#9af870"/></svg></div>
<div class="a sh" style="left:646px;top:540px;line-height:0"><svg width="16" height="17" viewBox="0 0 16 17"><rect x="1.7" y="2.7" width="11.2" height="13.8" rx="1.5" fill="#f8f4f0" stroke="#1a88ee" stroke-width="1.3"/><rect x="4.4" y="5.6" width="3.2" height="3" fill="#c8ccd0"/><rect x="4.4" y="10.4" width="3.2" height="3" fill="#c8ccd0"/><path d="M4.6 6.2 L6.2 8.4 L10.2 4.2 M4.6 11 L6.2 13.2 L10.2 9" stroke="#e01010" stroke-width="1.4" fill="none"/></svg></div>
<div class="a" style="left:726px;top:471px;width:1px;height:22px;background:#a0a0a0"></div>
<div class="a" style="left:789px;top:471px;width:1px;height:22px;background:#a0a0a0"></div>
<div class="btn" style="left:733px;top:472px;width:23px;height:20px"></div>
<div class="a" style="left:738px;top:476px;width:12px;height:12px;border:1px solid #6f6f6f;background:linear-gradient(#fafafa,#fff)"></div>
<svg class="a" style="left:738px;top:475px" width="13" height="13" viewBox="0 0 13 13"><path d="M2.2 7 L5 10.2 L11 2.5" stroke="#0a3cb4" stroke-width="2.2" fill="none" stroke-linecap="round" stroke-linejoin="round"/></svg>
<div class="btn" style="left:759px;top:472px;width:23px;height:20px"></div>
<div class="a" style="left:764px;top:476px;width:12px;height:12px;border:1px solid #6f6f6f;background:linear-gradient(#fafafa,#ececec)"></div>
<div class="btn" style="left:796px;top:472px;width:98px;height:20px"></div><div class="a sh" style="left:806px;top:473px;line-height:0"><svg width="16" height="16" viewBox="0 0 16 16"><circle cx="7.8" cy="7.6" r="4.9" fill="none" stroke="#1e9a14" stroke-width="4.4"/><circle cx="7.8" cy="7.6" r="4.9" fill="none" stroke="#3cc02c" stroke-width="2.8"/><path d="M0.6 3.6 L4.6 2.6 L3.6 6.8 Z M14.2 4.6 L12.8 8.8 L10 5.6 Z M9.8 15.2 L6 13.2 L9.4 10.6 Z" fill="#2aaa1c"/><g fill="none" stroke="#a8f880" stroke-width="1.1"><path d="M4.8 5.2 A3.8 3.8 0 0 1 8 3.8"/><path d="M11.4 6.8 A3.8 3.8 0 0 1 10.6 10"/><path d="M7.8 11.4 A3.8 3.8 0 0 1 4.6 9.8"/></g><path d="M7.8 7.6 L7.8 1 M7.8 7.6 L13.6 10.8 M7.8 7.6 L2 10.8" stroke="#b8c8b0" stroke-width="0.7"/><circle cx="7.8" cy="7.6" r="2.1" fill="#dcdcdc"/></svg></div><div class="t" style="left:825px;top:473px">F5-Atuali<span style="text-decoration:underline">z</span>ar</div>
<div class="btn" style="left:897px;top:472px;width:83px;height:20px"></div><div class="a sh" style="left:905px;top:473px;line-height:0"><svg width="17" height="17" viewBox="0 0 17 17"><defs><linearGradient id="fr" x1="0" x2="1"><stop offset="0" stop-color="#101010"/><stop offset="0.35" stop-color="#b0b0b0"/><stop offset="0.65" stop-color="#ffffff"/><stop offset="1" stop-color="#a8a8a8"/></linearGradient><linearGradient id="fc" x1="0" x2="1"><stop offset="0" stop-color="#c8c8c8"/><stop offset="0.35" stop-color="#ffffff"/><stop offset="0.75" stop-color="#d0d0d0"/><stop offset="1" stop-color="#585858"/></linearGradient></defs><path d="M1.2 3.8 L7 10.8 L7 15.8 L11.4 15.8 L11.4 10.8 L16 3.8 Z" fill="url(#fc)" stroke="#7a7a7a" stroke-width="0.6"/><path d="M6.8 11.5 L6.8 16 L11.6 16 L11.6 11.5 Z" fill="#4a4a4a"/><ellipse cx="8.6" cy="3.6" rx="7.6" ry="2.7" fill="url(#fr)"/><ellipse cx="9.2" cy="3.5" rx="5.4" ry="1.5" fill="#f0f0f0"/><path d="M8.6 10.4 L10.2 14 L15 7.2" stroke="#1a5ee8" stroke-width="1.9" fill="none" stroke-linejoin="round"/></svg></div><div class="t" style="left:924px;top:473px">F9-Filtros</div>
<div class="btn" style="left:982px;top:472px;width:11px;height:20px"></div>
<svg class="a" style="left:983px;top:478px" width="9" height="9" viewBox="0 0 9 9"><path d="M1 2.5 L8 2.5 L4.5 6 Z" fill="#000"/></svg>
<div class="btn" style="left:897px;top:504px;width:98px;height:42px"></div><div class="a sh" style="left:927px;top:516px;line-height:0"><svg width="17" height="17" viewBox="0 0 17 17"><defs><linearGradient id="dg" x1="0" x2="1"><stop offset="0" stop-color="#a4a4e4"/><stop offset="1" stop-color="#7070b8"/></linearGradient></defs><path d="M6 1.8 L9.2 1 L9.2 15.8 L6 14.6 Z" fill="#5c5c6c"/><path d="M9 1.2 L15.4 1.4 L15.4 15 L9 15.8 Z" fill="url(#dg)"/><path d="M8.4 2.6 L9.6 2.4 L9.6 9.6 L8.4 9.6 Z" fill="#b8f0ff"/><rect x="11.8" y="3.8" width="2" height="1" fill="#fff"/><rect x="11" y="7.4" width="1" height="1" fill="#e8e8ff"/><path d="M0.8 6.2 L4.2 6.2 L4.2 3.8 L8.6 8.2 L4.2 12.4 L4.2 10.2 L0.8 10.2 Z" fill="#14a010"/><path d="M1.6 7 L5 7 L5 5.6 L7.6 8.2 L5 10.8 L5 9.4 L1.6 9.4 Z" fill="#70e050"/></svg></div><div class="t" style="left:946px;top:516px"><span style="text-decoration:underline">S</span>air</div>
</body></html>
